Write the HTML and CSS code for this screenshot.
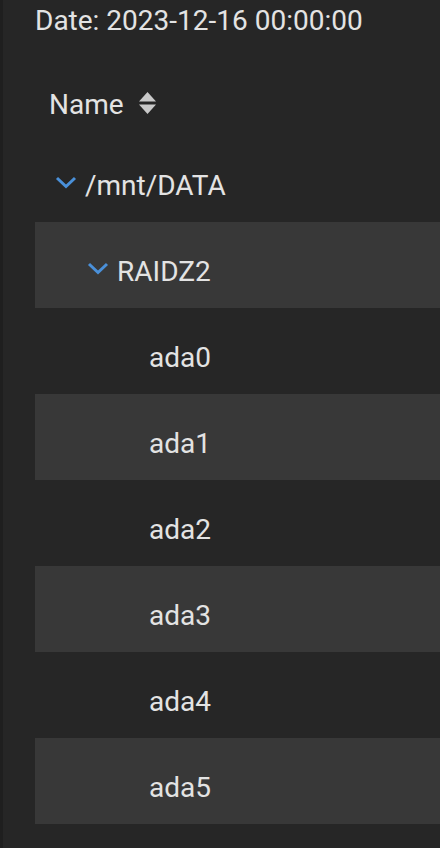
FILE: index.html
```html
<!DOCTYPE html>
<html lang="en">
<head>
	<meta charset="UTF-8">
	<title>Pool layout</title>
	<link rel="stylesheet" href="styles.css">
</head>
<body>
	<div class="panel">
		<div class="date">Date: 2023-12-16 00:00:00</div>
		<div class="tree">
			<div class="tree-head">
				<span>Name</span>
				<svg class="sort" width="17" height="22" viewBox="0 0 17 22">
					<path d="M8.5 0 L17 9.5 L0 9.5 Z" fill="#c9c9c9"/>
					<path d="M0 12.5 L17 12.5 L8.5 22 Z" fill="#c9c9c9"/>
				</svg>
			</div>
			<div class="tree-row lvl-0">
				<svg class="caret" width="22" height="13" viewBox="0 0 22 13">
					<path d="M2 2 L11 10.5 L20 2" fill="none" stroke="#4a90d9" stroke-width="3"/>
				</svg>
				<span>/mnt/DATA</span>
			</div>
			<div class="tree-row lvl-1 odd">
				<svg class="caret" width="22" height="13" viewBox="0 0 22 13">
					<path d="M2 2 L11 10.5 L20 2" fill="none" stroke="#4a90d9" stroke-width="3"/>
				</svg>
				<span>RAIDZ2</span>
			</div>
			<div class="tree-row lvl-2"><span>ada0</span></div>
			<div class="tree-row lvl-2 odd"><span>ada1</span></div>
			<div class="tree-row lvl-2"><span>ada2</span></div>
			<div class="tree-row lvl-2 odd"><span>ada3</span></div>
			<div class="tree-row lvl-2"><span>ada4</span></div>
			<div class="tree-row lvl-2 odd"><span>ada5</span></div>
		</div>
	</div>
</body>
</html>
```

FILE: styles.css
```css
*{
	margin: 0;
	padding: 0;
	box-sizing: border-box;
}
html, body{
	height: 100%;
}
body{
	background-color: #262626;
	color: #e3e3e3;
	font-family: Roboto, "Liberation Sans", sans-serif;
	font-size: 28px;
}
.panel{
	min-height: 100%;
	border-left: 3px solid #1f1f1f;
	padding-left: 32px;
}
.date{
	padding-top: 5px;
	line-height: 32px;
}
.tree-head{
	height: 99px;
	padding-top: 36px;
	padding-left: 14px;
	display: flex;
	align-items: center;
}
.tree-head .sort{
	margin-left: 15px;
	margin-top: -3px;
}
.tree-row{
	height: 86px;
	padding-top: 13px;
	display: flex;
	align-items: center;
}
.tree-row.odd{
	background-color: #383838;
}
.caret{
	margin-right: 8px;
	margin-top: -6px;
}
.lvl-0{
	padding-left: 20px;
}
.lvl-1{
	padding-left: 52px;
}
.lvl-2{
	padding-left: 114px;
}
```
